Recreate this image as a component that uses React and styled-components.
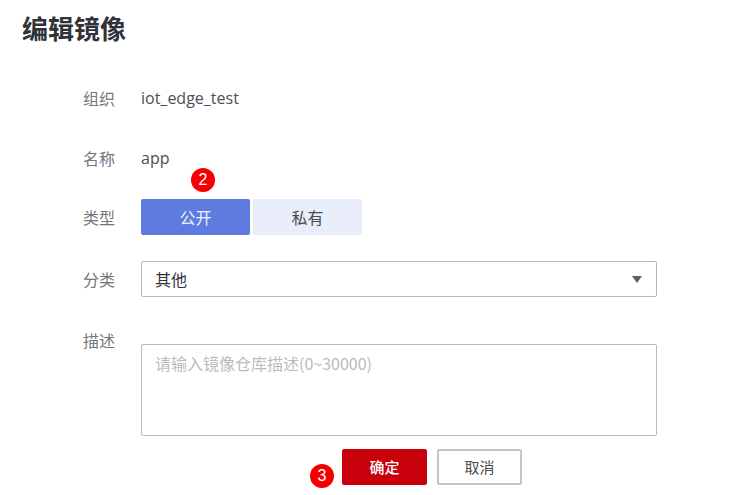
import React from "react";
import styled, { createGlobalStyle } from "styled-components";

const Global = createGlobalStyle`
  html, body { margin: 0; padding: 0; background: #fff; }
  body { font-family: "Open Sans", "Noto Sans CJK SC", sans-serif; }
`;

const CJK = `"Noto Sans CJK SC", "Liberation Sans", sans-serif`;

const Page = styled.div`
  width: 740px;
  height: 495px;
  position: relative;
  overflow: hidden;
  padding: 10px 0 0 22px;
  box-sizing: border-box;
`;

const Title = styled.h1`
  margin: 0;
  font: 700 26px/36px ${CJK};
  color: #2f3237;
  height: 36px;
`;

const Form = styled.div`
  display: flex;
  flex-direction: column;
  margin: 22px 0 0 61px;
  width: 574px;
`;

const Row = styled.div`
  display: grid;
  grid-template-columns: 58px 516px;
  align-items: ${(p) => (p.$top ? "start" : "center")};
  height: ${(p) => p.$h}px;
`;

const Label = styled.div`
  font: 400 16px/20px ${CJK};
  color: #73767c;
  margin-top: ${(p) => p.$mt || 0}px;
`;

const Value = styled.div`
  font: 400 16px/20px "Open Sans", ${CJK};
  color: #4d4f57;
`;

const Segmented = styled.div`
  display: flex;
  gap: 3px;
`;

const Segment = styled.div`
  width: 109px;
  height: 36px;
  border-radius: 2px;
  display: flex;
  align-items: center;
  justify-content: center;
  font: 400 16px/20px ${CJK};
  background: ${(p) => (p.$active ? "#5e7ce0" : "#e9edfa")};
  color: ${(p) => (p.$active ? "#eef1fc" : "#4a4c55")};
`;

const Select = styled.div`
  height: 36px;
  box-sizing: border-box;
  border: 1px solid #b4b5be;
  border-radius: 2px;
  display: flex;
  align-items: center;
  justify-content: space-between;
  padding: 0 14px 0 13px;
  font: 400 16px/20px ${CJK};
  color: #33353b;
`;

const Caret = styled.svg`
  width: 10px;
  height: 7px;
  fill: #5c5f69;
  display: block;
`;

const TextArea = styled.div`
  height: 92px;
  margin-top: 33px;
  box-sizing: border-box;
  border: 1px solid #b8b9c1;
  border-radius: 2px;
  padding: 8px 13px;
  font: 400 16px/20px ${CJK};
  color: #b9bbc1;
`;

const Actions = styled.div`
  display: flex;
  gap: 10px;
  margin: 13px 0 0 259px;
`;

const Button = styled.div`
  width: 85px;
  height: 36px;
  box-sizing: border-box;
  border-radius: 2px;
  display: flex;
  align-items: center;
  justify-content: center;
  font: ${(p) => (p.$primary ? 500 : 400)} 15px/20px ${CJK};
  background: ${(p) => (p.$primary ? "#c7000b" : "#fff")};
  color: ${(p) => (p.$primary ? "#fff" : "#4a4c55")};
  border: ${(p) => (p.$primary ? "none" : "2px solid #c4c5cc")};
`;

const Badge = styled.div`
  position: absolute;
  left: ${(p) => p.$x - 12}px;
  top: ${(p) => p.$y - 12}px;
  width: 24px;
  height: 24px;
  border-radius: 50%;
  background: #f40000;
  color: #fff;
  display: flex;
  align-items: center;
  justify-content: center;
  font: 400 16px/1 "Liberation Sans", sans-serif;
`;

export default function App() {
  return (
    <Page>
      <Global />
      <Title>编辑镜像</Title>
      <Form>
        <Row $h={60}>
          <Label>组织</Label>
          <Value>iot_edge_test</Value>
        </Row>
        <Row $h={59}>
          <Label>名称</Label>
          <Value>app</Value>
        </Row>
        <Row $h={60}>
          <Label>类型</Label>
          <Segmented>
            <Segment $active>公开</Segment>
            <Segment>私有</Segment>
          </Segmented>
        </Row>
        <Row $h={64}>
          <Label>分类</Label>
          <Select>
            其他
            <Caret viewBox="0 0 10 7">
              <path d="M0 0h10L5 7z" />
            </Caret>
          </Select>
        </Row>
        <Row $h={125} $top>
          <Label $mt={19}>描述</Label>
          <TextArea>请输入镜像仓库描述(0~30000)</TextArea>
        </Row>
        <Actions>
          <Button $primary>确定</Button>
          <Button>取消</Button>
        </Actions>
      </Form>
      <Badge $x={203} $y={180}>2</Badge>
      <Badge $x={322} $y={476}>3</Badge>
    </Page>
  );
}
